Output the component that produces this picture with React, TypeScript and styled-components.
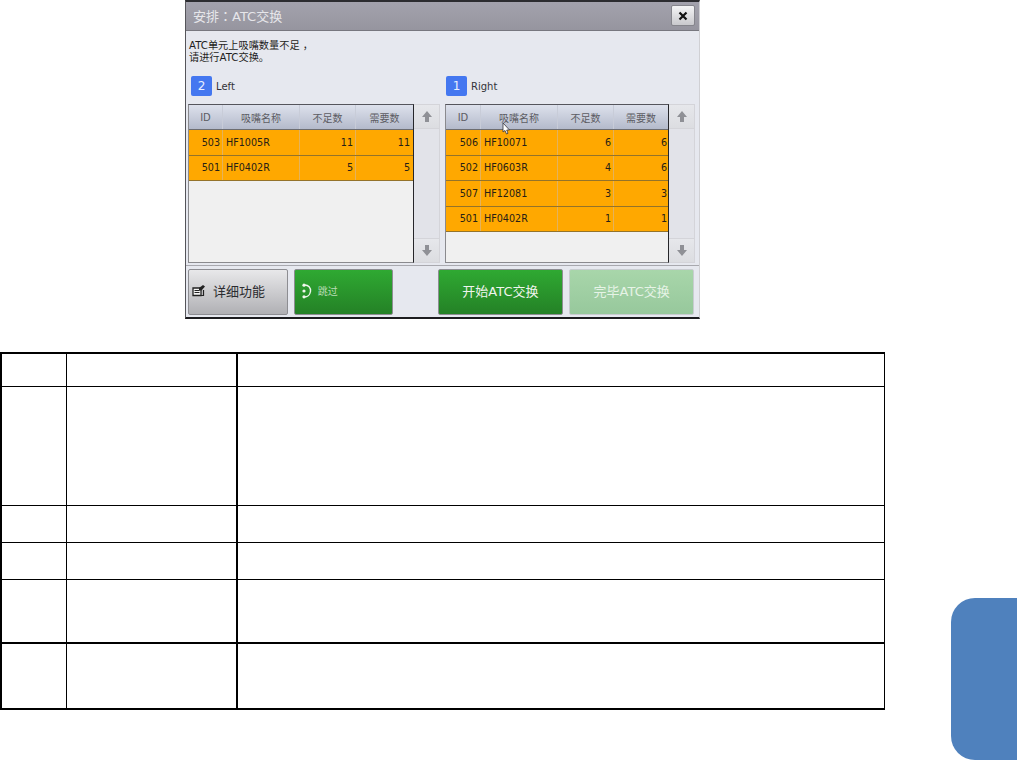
import React from "react";
import styled, { createGlobalStyle } from "styled-components";

const Global = createGlobalStyle`
  html, body { margin: 0; padding: 0; background: #fff; }
  body { font-family: "DejaVu Sans", "Noto Sans CJK SC", sans-serif; }
`;

const Page = styled.div`
  display: flex;
  width: 1017px;
  height: 760px;
  overflow: hidden;
`;
const Main = styled.div`
  width: 885px;
  display: flex;
  flex-direction: column;
`;
const SideTab = styled.div`
  align-self: flex-end;
  width: 66px;
  height: 162px;
  margin-left: 66px;
  background: #4f81bd;
  border-radius: 24px 0 0 24px;
`;

const Dialog = styled.div`
  box-sizing: border-box;
  width: 515px;
  height: 319px;
  margin-left: 185px;
  background: #e6e8ef;
  border-top: 2px solid #2c2c30;
  border-left: 1px solid #55555a;
  border-bottom: 2px solid #1c1c1f;
  border-right: 1px solid #d0d0d4;
  display: flex;
  flex-direction: column;
`;
const TitleBar = styled.div`
  box-sizing: border-box;
  height: 29px;
  flex: none;
  display: flex;
  align-items: center;
  justify-content: space-between;
  padding: 0 4px 1px 7px;
  background: linear-gradient(#a3a2ad, #96959f);
  border-bottom: 1px solid #77777f;
`;
const Title = styled.span`
  font-family: "DejaVu Sans", "Noto Sans CJK TC", sans-serif;
  font-size: 13px;
  color: #e6e6ea;
`;
const CloseButton = styled.div`
  box-sizing: border-box;
  width: 24px;
  height: 21px;
  display: flex;
  align-items: center;
  justify-content: center;
  border: 1px solid #85858c;
  border-radius: 2px;
  background: linear-gradient(#f4f4f5, #c9c9cd);
`;
const Message = styled.div`
  height: 34px;
  flex: none;
  padding: 9px 0 0 3px;
  font-size: 10.2px;
  line-height: 12px;
  color: #1e1e22;
`;
const Panels = styled.div`
  display: flex;
  padding: 0 0 0 2px;
  gap: 5px;
  height: 189px;
  flex: none;
`;
const Panel = styled.div<{ $w: number }>`
  display: flex;
  flex-direction: column;
  width: ${(p) => p.$w}px;
`;
const PanelHead = styled.div<{ $inset: number }>`
  height: 30px;
  flex: none;
  display: flex;
  align-items: center;
  padding-left: ${(p) => p.$inset}px;
  gap: 4px;
  box-sizing: border-box;
  padding-bottom: 6px;
  font-size: 10px;
  color: #333338;
`;
const Badge = styled.span`
  width: 21px;
  height: 20px;
  display: flex;
  align-items: center;
  justify-content: center;
  border-radius: 2px;
  background: #4477f0;
  color: #e8eeff;
  font-size: 12px;
`;
const PanelBody = styled.div`
  display: flex;
  height: 159px;
  flex: none;
`;
const Grid = styled.div`
  box-sizing: border-box;
  flex: 1;
  position: relative;
  background: #f0f0f0;
  border: 1px solid #8a8a8e;
  border-right: 1px solid #26262a;
  border-top: 1px solid #55555c;
  display: flex;
  flex-direction: column;
`;
const Row = styled.div<{ $cols: string }>`
  display: grid;
  grid-template-columns: ${(p) => p.$cols};
  flex: none;
`;
const HeadRow = styled(Row)`
  height: 24px;
  background: linear-gradient(#dde1ec, #b4bacb);
  border-bottom: 1px solid #6d6d70;
`;
const HeadCell = styled.div`
  display: flex;
  align-items: center;
  justify-content: center;
  font-size: 10px;
  color: #5c5c63;
  border-right: 1px solid #c8ccd8;
  &:last-child { border-right: none; }
`;
const DataRow = styled(Row)`
  box-sizing: border-box;
  height: 25.5px;
  background: #ffa800;
  border-bottom: 1px solid #94732a;
`;
const Cell = styled.div<{ $pad: number }>`
  display: flex;
  align-items: center;
  justify-content: flex-end;
  padding: 0 ${(p) => p.$pad}px 0 3px;
  font-size: 9.6px;
  color: #262016;
  border-right: 1px solid #e4b25c;
  &:last-child { border-right: none; }
`;
const NameCell = styled(Cell)`
  justify-content: flex-start;
`;
const ScrollBar = styled.div`
  box-sizing: border-box;
  width: 26px;
  display: flex;
  flex-direction: column;
  justify-content: space-between;
  background: #e2e3e9;
  border-right: 1px solid #d4d4d9;
`;
const ScrollBtn = styled.div`
  height: 25px;
  display: flex;
  align-items: center;
  justify-content: center;
  background: linear-gradient(#e6e7eb, #dcdde1);
  border-top: 1px solid #d4d4d9;
  border-bottom: 1px solid #d4d4d9;
  box-sizing: border-box;
`;
const Cursor = styled.svg`
  position: absolute;
  left: 56px;
  top: 17px;
`;
const Footer = styled.div`
  flex: 1;
  display: flex;
  align-items: flex-start;
  padding: 3px 5px 0 2px;
  margin-top: 2px;
  border-top: 1px solid #a8a8ae;
  gap: 6px;
`;
const FootButton = styled.div<{ $w: number; $kind: string; $left?: number }>`
  box-sizing: border-box;
  width: ${(p) => p.$w}px;
  height: 46px;
  margin-left: ${(p) => p.$left || 0}px;
  padding-bottom: 3px;
  display: flex;
  align-items: center;
  justify-content: center;
  border-radius: 2px;
  font-size: 13px;
  color: ${(p) => (p.$kind === "off" ? "#e6f3e6" : "#f0f4ee")};
  border: 1px solid ${(p) => (p.$kind === "off" ? "#c8ccd0" : "#8d8d92")};
  background: ${(p) =>
    p.$kind === "off"
      ? "linear-gradient(#a8d6aa, #97c89c)"
      : "linear-gradient(#2fa932, #248126)"};
`;
const DetailButton = styled(FootButton)`
  justify-content: flex-start;
  padding-left: 3px;
  gap: 7px;
  color: #2c2c30;
  background: linear-gradient(#e8e8ea, #b0b0b4);
`;
const SkipButton = styled(FootButton)`
  justify-content: flex-start;
  padding-left: 6px;
  gap: 6px;
  font-size: 10px;
  color: #b9dcb6;
`;

const DocTable = styled.table`
  margin-top: 33px;
  width: 885px;
  height: 358px;
  border-collapse: collapse;
  table-layout: fixed;
  border-top: 2px solid #000;
  border-left: 2px solid #000;
  border-bottom: 2px solid #000;
  border-right: 1px solid #000;
`;
const DocRow = styled.tr<{ $h: number; $thick?: boolean }>`
  height: ${(p) => p.$h}px;
  border-top: ${(p) => (p.$thick ? "2px" : "1px")} solid #000;
`;
const DocCell = styled.td<{ $w?: number; $thick?: boolean }>`
  padding: 0;
  ${(p) => (p.$w ? `width: ${p.$w}px;` : "")}
  border-right: ${(p) => (p.$thick ? "2px" : "1px")} solid #000;
  &:last-child { border-right: none; }
`;

const Arrow = ({ down }: { down?: boolean }) => (
  <svg width="12" height="13" viewBox="0 0 12 13" style={down ? { transform: "scaleY(-1)" } : undefined}>
    <path d="M6 1 L11 7 H8 V12 H4 V7 H1 Z" fill="#8f9096" />
  </svg>
);

const COLS_L = "34px 77px 56px 1fr";
const COLS_R = "35px 77px 56px 1fr";

type TableProps = { cols: string; rows: string[][]; lastPad: number; cursor?: boolean };

const TableView = ({ cols, rows, lastPad, cursor }: TableProps) => (
  <PanelBody>
    <Grid>
      <HeadRow $cols={cols}>
        <HeadCell>ID</HeadCell>
        <HeadCell>吸嘴名称</HeadCell>
        <HeadCell>不足数</HeadCell>
        <HeadCell>需要数</HeadCell>
      </HeadRow>
      {rows.map((r) => (
        <DataRow $cols={cols} key={r[0]}>
          <Cell $pad={2}>{r[0]}</Cell>
          <NameCell $pad={2}>{r[1]}</NameCell>
          <Cell $pad={2}>{r[2]}</Cell>
          <Cell $pad={lastPad}>{r[3]}</Cell>
        </DataRow>
      ))}
      {cursor && (
        <Cursor width="9" height="13" viewBox="0 0 9 13">
          <path d="M1 1 V10 L3 8.5 L4.5 12 L6 11.3 L4.7 8 H7.5 Z" fill="#fff" stroke="#33333a" strokeWidth="0.8" />
        </Cursor>
      )}
    </Grid>
    <ScrollBar>
      <ScrollBtn><Arrow /></ScrollBtn>
      <ScrollBtn><Arrow down /></ScrollBtn>
    </ScrollBar>
  </PanelBody>
);

export default function App() {
  return (
    <Page>
      <Global />
      <Main>
        <Dialog>
          <TitleBar>
            <Title>安排：ATC交换</Title>
            <CloseButton>
              <svg width="10" height="10" viewBox="0 0 10 10">
                <path d="M1.5 1.5 L8.5 8.5 M8.5 1.5 L1.5 8.5" stroke="#111" strokeWidth="2.2" />
              </svg>
            </CloseButton>
          </TitleBar>
          <Message>
            ATC单元上吸嘴数量不足 ，
            <br />
            请进行ATC交换。
          </Message>
          <Panels>
            <Panel $w={252}>
              <PanelHead $inset={3}><Badge>2</Badge>Left</PanelHead>
              <TableView
                cols={COLS_L}
                lastPad={3}
                rows={[
                  ["503", "HF1005R", "11", "11"],
                  ["501", "HF0402R", "5", "5"],
                ]}
              />
            </Panel>
            <Panel $w={250}>
              <PanelHead $inset={1}><Badge>1</Badge>Right</PanelHead>
              <TableView
                cursor
                cols={COLS_R}
                lastPad={1}
                rows={[
                  ["506", "HF10071", "6", "6"],
                  ["502", "HF0603R", "4", "6"],
                  ["507", "HF12081", "3", "3"],
                  ["501", "HF0402R", "1", "1"],
                ]}
              />
            </Panel>
          </Panels>
          <Footer>
            <DetailButton $w={100} $kind="grey">
              <svg width="14" height="13" viewBox="0 0 14 13">
                <path d="M1 4 H9 V11.5 H1 Z" fill="#f4f4f4" stroke="#222" strokeWidth="1.3" />
                <path d="M2.5 6.5 H7.5 M2.5 8.5 H7.5" stroke="#222" />
                <path d="M7 4 L11 1 L13 2.5 L9.5 6.5 H7 Z" fill="#222" />
                <path d="M11.5 6 V11.5 H9" fill="none" stroke="#222" strokeWidth="1.2" />
              </svg>
              详细功能
            </DetailButton>
            <SkipButton $w={99} $kind="green">
              <svg width="11" height="16" viewBox="0 0 11 16">
                <path d="M3 2 C7.5 1.5 10 5 9.5 8.5 C9 11.5 6.5 14 3.5 14" fill="none" stroke="#f0f6ee" strokeWidth="1.4" />
                <circle cx="3" cy="2.2" r="1.6" fill="#f0f6ee" />
                <circle cx="3" cy="8" r="1.6" fill="#f0f6ee" />
                <circle cx="3" cy="13.8" r="1.6" fill="#f0f6ee" />
              </svg>
              跳过
            </SkipButton>
            <FootButton $w={126} $kind="green" $left={39}>开始ATC交换</FootButton>
            <FootButton $w={125} $kind="off">完毕ATC交换</FootButton>
          </Footer>
        </Dialog>
        <DocTable>
          <tbody>
            <DocRow $h={33}>
              <DocCell $w={64} />
              <DocCell $w={169} $thick />
              <DocCell />
            </DocRow>
            <DocRow $h={119}><DocCell /><DocCell $thick /><DocCell /></DocRow>
            <DocRow $h={37}><DocCell /><DocCell $thick /><DocCell /></DocRow>
            <DocRow $h={37}><DocCell /><DocCell $thick /><DocCell /></DocRow>
            <DocRow $h={64}><DocCell /><DocCell $thick /><DocCell /></DocRow>
            <DocRow $h={66} $thick><DocCell /><DocCell $thick /><DocCell /></DocRow>
          </tbody>
        </DocTable>
      </Main>
      <SideTab />
    </Page>
  );
}
